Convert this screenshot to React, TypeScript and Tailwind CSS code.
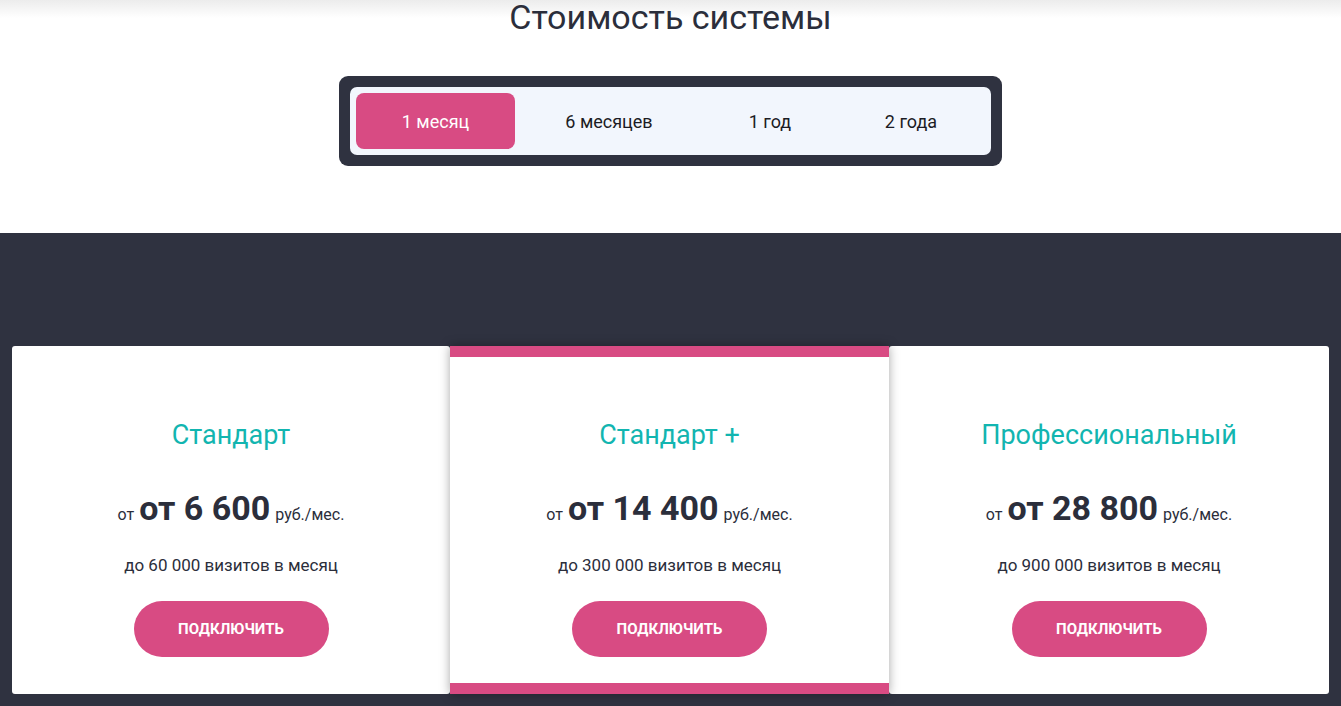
import React, { useState } from 'react';

const periods = [
  { label: '1 месяц', w: 'w-[159px]' },
  { label: '6 месяцев', w: 'w-[188px]' },
  { label: '1 год', w: 'w-[134px]' },
  { label: '2 года', w: 'w-[148px]' },
];

const plans = [
  { name: 'Стандарт', price: 'от 6 600', visits: 'до 60 000 визитов в месяц' },
  { name: 'Стандарт +', price: 'от 14 400', visits: 'до 300 000 визитов в месяц', featured: true },
  { name: 'Профессиональный', price: 'от 28 800', visits: 'до 900 000 визитов в месяц' },
];

const PlanCard = ({ name, price, visits, featured }: { name: string; price: string; visits: string; featured?: boolean }) => (
  <div
    className={
      featured
        ? 'relative z-10 flex flex-col items-center bg-white border-y-[11px] border-[#d84b83] pt-[63px] pb-[26px] shadow-[0_0_10px_rgba(0,0,0,0.35)]'
        : 'flex flex-col items-center bg-white rounded-[3px] pt-[74px] pb-[37px]'
    }
  >
    <h3 className="text-[27px] leading-[31px] text-[#12b5b0]">{name}</h3>
    <div className="mt-[38px] flex items-baseline gap-[5px] text-[#2b2e3b] leading-[38px]">
      <span className="text-[16px]">от</span>
      <span className="text-[34px] font-bold">{price}</span>
      <span className="text-[16px]">руб./мес.</span>
    </div>
    <p className="mt-[19px] text-[17px] leading-[24px] text-[#2b2e3b]">{visits}</p>
    <button className="mt-[24px] w-[195px] h-[56px] rounded-full bg-[#d84b83] text-white text-[15px] font-bold uppercase">
      Подключить
    </button>
  </div>
);

export default function App() {
  const [active, setActive] = useState(0);

  return (
    <div className="min-h-screen bg-white font-['Roboto',sans-serif]">
      <section className="relative flex flex-col items-center pb-[67px]">
        <div className="pointer-events-none absolute inset-x-0 top-0 h-[18px] bg-gradient-to-b from-[#ececec] to-white/0" />
        <h2 className="relative text-[34px] leading-[34px] text-[#2b2e3b] h-[34px]">Стоимость системы</h2>
        <div className="mt-[42px] w-[663px] rounded-[9px] bg-[#2f3240] p-[11px]">
          <div className="flex rounded-[7px] bg-[#f2f6fd] p-[6px]">
            {periods.map((p, i) => (
              <button
                key={p.label}
                onClick={() => setActive(i)}
                className={`${p.w} h-[56px] rounded-[8px] text-[18px] ${
                  active === i ? 'bg-[#d84b83] text-white' : 'text-[#1c1c24]'
                }`}
              >
                {p.label}
              </button>
            ))}
          </div>
        </div>
      </section>

      <section className="bg-[#2f3240] px-[12px] pt-[113px] pb-[12px]">
        <div className="grid grid-cols-[438px_439px_1fr]">
          {plans.map((p) => (
            <PlanCard key={p.name} {...p} />
          ))}
        </div>
      </section>
    </div>
  );
}
